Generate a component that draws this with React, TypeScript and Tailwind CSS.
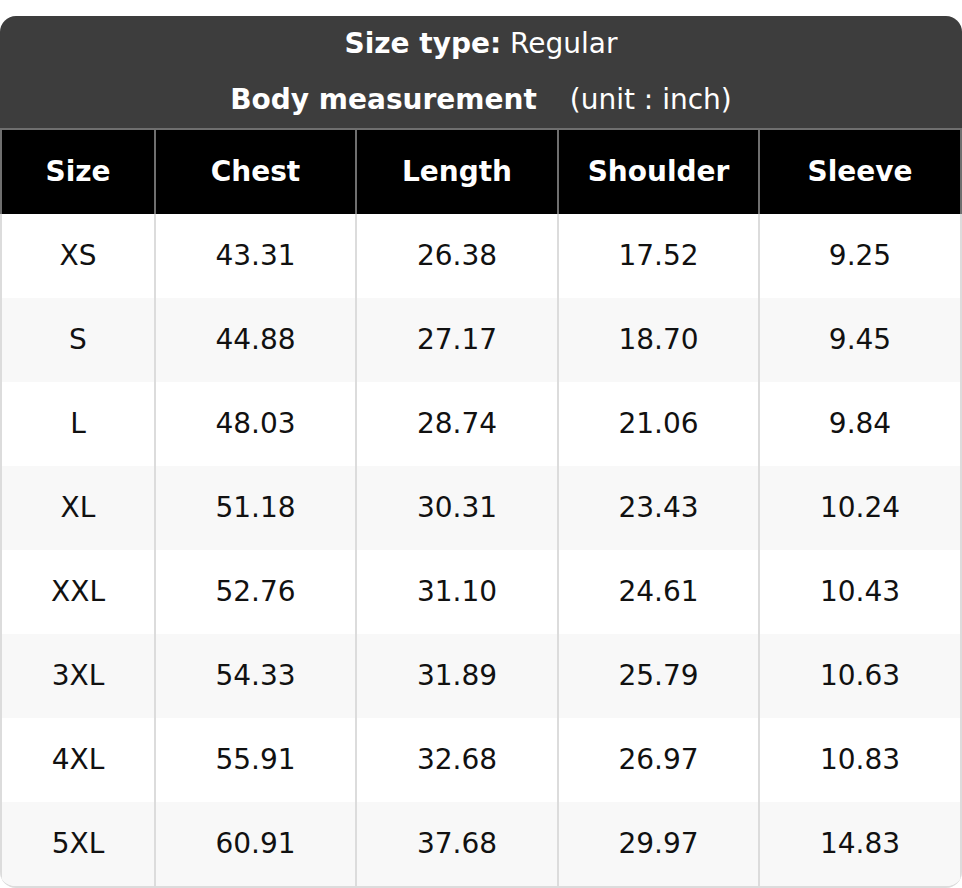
import React from "react";

const rows: string[][] = [
  ["XS", "43.31", "26.38", "17.52", "9.25"],
  ["S", "44.88", "27.17", "18.70", "9.45"],
  ["L", "48.03", "28.74", "21.06", "9.84"],
  ["XL", "51.18", "30.31", "23.43", "10.24"],
  ["XXL", "52.76", "31.10", "24.61", "10.43"],
  ["3XL", "54.33", "31.89", "25.79", "10.63"],
  ["4XL", "55.91", "32.68", "26.97", "10.83"],
  ["5XL", "60.91", "37.68", "29.97", "14.83"],
];

const heads = ["Size", "Chest", "Length", "Shoulder", "Sleeve"];

export default function App() {
  return (
    <div
      className="w-[962px] pt-[16px] bg-white"
      style={{ fontFamily: '"DejaVu Sans", sans-serif' }}
    >
      <div className="rounded-[16px] overflow-hidden border-b-2 border-[#dcdcdc]">
        <div className="bg-[#3d3d3d] text-white text-[28px]">
          <div className="h-[56px] flex items-center justify-center">
            <span className="font-bold">Size type:</span>
            <span>&nbsp;Regular</span>
          </div>
          <div className="h-[56px] flex items-center justify-center">
            <span className="font-bold">Body measurement</span>
            <span className="pl-[33px]">(unit : inch)</span>
          </div>
        </div>
        <div className="grid grid-cols-[154px_201px_202px_201px_1fr]">
          {heads.map((h, i) => (
            <div
              key={h}
              className={
                "h-[86px] bg-black text-white font-bold text-[28px] flex items-center justify-center border-t-2 border-l-2 border-[#6f6f6f]" +
                (i === 4 ? " border-r-2" : "")
              }
            >
              {h}
            </div>
          ))}
          {rows.map((r, ri) =>
            r.map((c, ci) => (
              <div
                key={ri + "-" + ci}
                className={
                  "h-[84px] text-[28px] text-[#111] flex items-center justify-center border-l-2 border-[#dcdcdc] " +
                  (ri % 2 === 1 ? "bg-[#f8f8f8]" : "bg-white") +
                  (ci === 4 ? " border-r-2" : "")
                }
              >
                {c}
              </div>
            ))
          )}
        </div>
      </div>
    </div>
  );
}
